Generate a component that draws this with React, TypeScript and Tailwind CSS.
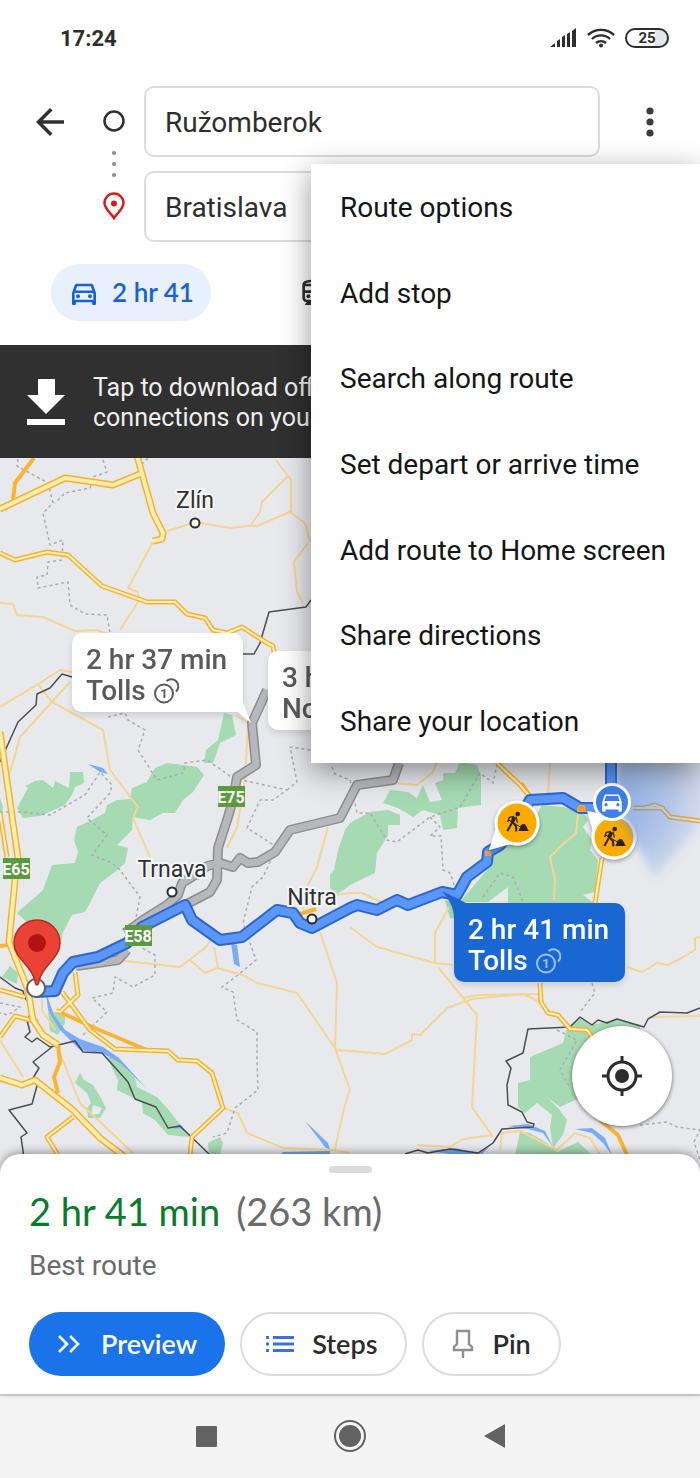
import React, { useState } from 'react';
import { MdArrowBack, MdDirectionsCar, MdOutlineDirectionsCar, MdOutlineDirectionsTransit } from 'react-icons/md';

const MENU_ITEMS = [
  'Route options',
  'Add stop',
  'Search along route',
  'Set depart or arrive time',
  'Add route to Home screen',
  'Share directions',
  'Share your location',
];

// Map geometry, all in map units
const FORESTS = [
  '17,808 28,788 25,786 35,781 43,780 53,788 55,781 69,788 70,772 83,772 84,783 75,787 73,793 65,805 40,816 23,818',
  '132,788 147,782 155,768 167,763 197,767 204,775 193,792 183,800 175,813 163,813 150,820 133,817 132,830 117,845 128,848 125,863 115,872 100,883 93,897 85,912 72,915 63,932 60,947 50,965 35,930 17,913 43,890 52,865 75,863 78,852 74,840 77,827 92,820 105,813 107,805 117,800 130,799',
  '224,713 232,715 236,735 220,743 213,763 204,763 206,750 218,740',
  '0,798 3,807 0,822',
  '2,977 10,966 18,973 17,984',
  '48,1012 65,1013 65,1023 58,1035 50,1031',
  '107,1057 117,1058 127,1070 135,1078 137,1087 157,1097 167,1108 182,1127 190,1137 168,1135 155,1120 143,1113 142,1102 117,1090 118,1080 113,1070',
  '80,1073 84,1080 93,1085 98,1093 106,1108 100,1118 88,1118 87,1108 91,1103 87,1093 75,1083',
  '208,1143 220,1137 223,1143 220,1155 209,1155',
  '350,823 345,830 338,850 334,870 330,875 330,888 335,895 345,889 350,885 375,873 377,853 388,835 388,825 400,825 400,815 388,810 370,812',
  '383,803 390,790 408,792 417,798 423,785 430,802 442,800 435,783 443,780 443,773 455,773 460,762 477,765 481,775 481,805 458,808 457,828 443,830 440,815 423,810 413,817 398,808',
  '542,805 563,807 583,812 588,820 583,827 592,840 590,850 598,860 595,892 583,895 595,904 508,904 508,887 488,902 460,902 487,870 493,850 523,840',
  '445,900 458,903 460,919 450,918',
  '567,1028 580,1017 592,1025 615,1019 640,1025 640,1100 575,1100 560,1107 548,1098 558,1108 567,1120 563,1135 553,1148 550,1128 552,1115 537,1103 525,1113 518,1107 518,1083 530,1080 530,1057 563,1043',
  '520,1132 530,1133 547,1143 557,1152 578,1142 592,1155 515,1155',
];

const WATER = [
  '88,764 103,768 108,774 100,772',
  '46,993 48,1010 60,1030 80,1050 102,1053 120,1063 146,1088 119,1058 103,1047 80,1039 65,1030 54,1015',
  '231,943 237,945 240,967 234,964',
  '305,1121 328,1143 330,1150 325,1147',
  '508,1126 528,1124 545,1131 553,1147 543,1133 528,1129',
  '575,1129 592,1128 605,1138 612,1155 603,1143 592,1133',
  '173,1129 180,1124 188,1134 180,1128',
  '428,1151 455,1148 478,1153 494,1142 480,1156 450,1154',
  '283,1152 330,1151 330,1154 280,1155',
];

const BORDERS = [
  '0,762 18,722 36,705 37,694 50,688 62,674 72,677',
  '242,654 254,654 260,643 269,612 306,607 311,600',
  '0,977 15,988 23,991 25,998 32,1007 29,1017 27,1020 30,1032 25,1037 32,1042 37,1038 50,1047 75,1041 83,1052 102,1053 128,1082 135,1099 156,1107 168,1128 180,1126 209,1154',
  '52,1047 33,1062 39,1068 33,1078 38,1082 32,1104 9,1110 27,1133 21,1137 24,1158',
  '700,1008 687,1013 660,1012 648,1019 644,1027 617,1019 607,1023 598,1020 592,1025 580,1017 570,1027 528,1029 523,1053 506,1061 511,1068 507,1085 508,1105 522,1112 527,1122 534,1124 533,1127 502,1129 493,1143 478,1153 450,1149 428,1153 418,1150 405,1154',
];

const DISTRICTS = [
  '18,459 17,466 48,483 53,503 43,513 50,545 63,540 62,560 48,562 47,575 37,577 38,588 68,582 70,605 85,614 107,615 110,633',
  '103,460 107,472 93,477 90,488 65,493 55,503',
  '148,458 142,464 138,472',
  '108,717 125,713 128,720 145,730 138,750 157,780 183,773 185,763 207,760 233,778 287,790 273,800 260,800 247,828 277,847 263,877 252,887 243,923 256,960 238,975 222,987 233,992 237,1020 257,1032 257,1060 258,1090 235,1108 227,1133 213,1137',
  '287,790 297,782 290,747 311,750',
  '332,767 335,774 350,780 357,813 370,813 387,840 397,842 430,817 460,807 480,773 493,783 497,765',
  '430,817 440,827 430,836 441,836 443,870 450,873 455,887',
  '0,812 22,812 50,815 85,795 100,772 112,785 110,793 87,818 107,835 92,855 112,863 120,870 140,897 135,923 142,948 155,955 155,975 133,987 115,977 113,993 92,998 107,1012 83,1035',
  '0,1003 20,1007 8,1015 0,1013',
  '483,897 500,873 513,877 523,902',
  '592,983 595,993 580,1012',
  '557,1030 577,1040 560,1070 570,1087',
  '640,1125 667,1122 677,1127 700,1130 694,1142 700,1160',
];

const MINOR_ROADS = [
  '167,531 190,524 200,523 230,528 248,526 257,526 290,512 305,523 310,542',
  '276,460 288,476 262,502 260,512 250,526',
  '288,476 291,480 291,512',
  '153,542 128,588 138,592 138,602 120,630',
  '308,543 294,562 297,592 303,603',
  '0,603 13,604 17,615 43,617 75,631 97,630 108,634',
  '0,707 40,683 60,670 72,672',
  '70,682 20,737 10,773',
  '37,683 52,702 103,730 110,770 138,807 133,818 150,857',
  '236,715 248,723 245,780 237,827 227,848',
  '328,827 317,867 308,885 303,910',
  '78,968 115,960 180,967 205,948 215,935',
  '190,960 205,973 217,968 243,975 257,983 297,993 335,1048 350,1090 345,1105 340,1125 335,1150',
  '214,947 218,968',
  '320,932 337,983 335,1048',
  '335,1050 350,1051 385,1054 412,1040 412,1034 420,1035 447,1008 472,999 523,994 540,1002',
  '350,927 377,947 435,963 453,965',
  '438,967 477,1015 472,1107 493,1137',
  '449,907 435,933 435,963',
  '335,913 362,908',
  '313,900 335,895 350,893 362,893 383,903',
  '393,783 417,785 432,773 437,763',
  '550,763 548,793',
  '578,813 576,833 560,847 550,857 555,880 554,900',
  '627,967 642,972 657,963 668,965 683,957 695,950 695,938 700,937',
  '463,998 477,995 543,994',
  '417,1145 450,1147 463,1139 493,1135',
  '223,1108 238,1113 247,1133 283,1148 333,1150 350,1153',
  '60,1053 80,1103 133,1153',
  '0,1040 23,1077',
  '650,1017 700,1016',
  '42,990 42,1010 55,1030',
  '500,1150 502,1133 520,1131 557,1150 575,1133 590,1138 600,1155',
];

const MAIN_ROADS = [
  '0,553 15,560 47,552 68,555 102,586 147,602 175,602 187,614 205,618 213,630 227,633 242,627 262,640 273,646 274,652',
  '73,1117 47,1137 58,1155',
  '75,972 78,995 60,1012 56,1011',
  '62,992 90,1030 115,1049 168,1051 178,1060 197,1061 212,1073 223,1108 192,1137 190,1155',
  '0,990 25,997',
  '0,1037 15,1016 38,1022',
  '497,763 520,785 530,797',
  '633,808 662,808 670,817 700,821',
  '645,808 655,805 664,809',
  '602,858 595,903',
  '540,983 541,1002 548,1013 558,1015 570,1029 587,1030 592,1037',
  '0,813 7,857',
];

const MOTORWAYS = [
  '0,509 65,478 113,485 140,474',
  '136,452 153,513 163,533 162,539 153,541',
  '0,732 18,858 15,880 9,942 28,990 33,1020 43,1035 58,1045',
  '0,1078 22,1085 35,1080 73,1110 100,1138 125,1157',
];

const ORANGE_ROADS = [
  '34,458 15,483 13,500',
  '58,1045 60,1062 54,1077 58,1093',
  '60,1012 90,1026 147,1050',
  '0,946 9,945',
  '600,1120 618,1135 627,1155',
  '300,914 316,909',
  '521,783 531,797',
];

const ALT_ROUTES = [
  '195,875 182,883 178,895 167,905 143,920 125,933',
  '399,763 393,780 357,785 340,818 290,830 275,852 258,862 248,863 240,858 233,867 220,863 207,866 195,876',
  '267,690 252,723 256,765 237,777 233,800 228,817 218,848 217,880 210,892 187,904',
  '127,950 118,960 76,966',
];

const BEST_ROUTE =
  '36,992 55,991 63,973 73,962 98,957 127,943 142,927 185,905 192,920 220,940 242,937 277,910 293,913 300,923 312,928 350,908 357,905 377,910 397,900 408,905 442,892 457,895 467,877 487,862 488,852 500,845 515,825 530,800 563,798 580,808 600,808 611,800 611,758';

const CITIES = [
  { name: 'Zlín', x: 195, y: 508, cx: 195, cy: 523 },
  { name: 'Trnava', x: 172, y: 877, cx: 172, cy: 892 },
  { name: 'Nitra', x: 312, y: 905, cx: 312, cy: 919 },
];

const SHIELDS = [
  { name: 'E75', x: 218, y: 786 },
  { name: 'E65', x: 3, y: 858 },
  { name: 'E58', x: 125, y: 925 },
];

const Lines: React.FC<{ items: string[]; color: string; width: number; dash?: string }> = ({ items, color, width, dash }) => (
  <g fill="none" stroke={color} strokeWidth={width} strokeDasharray={dash} strokeLinejoin="round">
    {items.map((points) => (
      <polyline key={points} points={points} />
    ))}
  </g>
);

const RoadWorks: React.FC<{ x: number; y: number }> = ({ x, y }) => (
  <svg x={x} y={y} width="23" height="21" viewBox="78 168 69 63" fill="none" stroke="#2b2210" strokeLinejoin="round">
    <circle cx="113" cy="177" r="7" fill="#2b2210" stroke="none" />
    <path d="M103 186L96 204" strokeWidth="11" />
    <path d="M95 205L82 228M98 202l10 12 1 15" strokeWidth="6" />
    <path d="M102 184L88 187l-5 14M108 185l4 18" strokeWidth="4" />
    <path d="M86 195l40 24" strokeWidth="3" />
    <path d="M115 228l8-17 5-4h6l5 7 7 14z" fill="#2b2210" stroke="none" />
  </svg>
);

const MapDrawing: React.FC = () => (
  <svg
    className="absolute inset-0 h-full w-full"
    viewBox="0 458 700 716"
    preserveAspectRatio="xMidYMid slice"
    role="img"
    aria-label="Route map"
  >
    <defs>
      <radialGradient id="heading" gradientUnits="userSpaceOnUse" cx="612" cy="802" r="110">
        <stop offset="0" stopColor="#4a80e0" stopOpacity="0.6" />
        <stop offset="0.5" stopColor="#4a80e0" stopOpacity="0.35" />
        <stop offset="1" stopColor="#4a80e0" stopOpacity="0" />
      </radialGradient>
      <filter id="soft" x="-20%" y="-20%" width="140%" height="140%">
        <feGaussianBlur stdDeviation="5" />
      </filter>
      <filter id="drop" x="-30%" y="-30%" width="160%" height="160%">
        <feDropShadow dx="0" dy="2" stdDeviation="2" floodOpacity="0.35" />
      </filter>
    </defs>
    <rect x="0" y="458" width="700" height="716" fill="#e8e9ed" />
    <g fill="#a5dab3">
      {FORESTS.map((points) => (
        <polygon key={points} points={points} />
      ))}
    </g>
    <polygon points="93,1105 102,1108 99,1114 91,1115" fill="#e8e9ed" />
    <g fill="#7baaf7">
      {WATER.map((points) => (
        <polygon key={points} points={points} />
      ))}
    </g>

    <Lines items={MINOR_ROADS} color="#f3d596" width={2} />
    <Lines items={DISTRICTS} color="#a9acb3" width={1.5} dash="3 3" />
    <Lines items={BORDERS} color="#4a4d52" width={1.5} />
    <Lines items={ORANGE_ROADS} color="#fbb432" width={4} />
    <Lines items={MAIN_ROADS} color="#f6b130" width={5} />
    <Lines items={MAIN_ROADS} color="#fff3bd" width={2} />
    <Lines items={MOTORWAYS} color="#f6b130" width={7} />
    <Lines items={MOTORWAYS} color="#fdeeb0" width={4} />

    <Lines items={ALT_ROUTES} color="#8c8e92" width={10} />
    <Lines items={ALT_ROUTES} color="#b6b8bb" width={7} />
    <Lines items={[BEST_ROUTE]} color="#2d67cc" width={12} />
    <Lines items={[BEST_ROUTE]} color="#5b96fb" width={8} />
    <path d="M485 851h6v5h-6zM577 808l2-3h5l2 3v4h-9z" fill="#f59d35" />

    {CITIES.map((city) => (
      <g key={city.name}>
        <circle cx={city.cx} cy={city.cy} r="4.5" fill="#fff" stroke="#2b2c2e" strokeWidth="2" />
        <text
          x={city.x}
          y={city.y}
          textAnchor="middle"
          fill="#2f3033"
          stroke="#f4f5f7"
          strokeWidth="4"
          paintOrder="stroke"
          className="font-[Roboto,sans-serif] text-[23px] font-normal"
        >
          {city.name}
        </text>
      </g>
    ))}

    {SHIELDS.map((shield) => (
      <g key={shield.name}>
        <rect x={shield.x} y={shield.y} width="27" height="21" fill="#5b9a3f" />
        <text
          x={shield.x + 13}
          y={shield.y + 17}
          textAnchor="middle"
          fill="#fff"
          className="font-[Roboto,sans-serif] text-[16px] font-bold"
        >
          {shield.name}
        </text>
      </g>
    ))}

    {/* Destination */}
    <circle cx="36" cy="988" r="9" fill="#fff" stroke="#5b5e63" strokeWidth="2" />
    <path
      d="M37 985c-1 0-2-2-2-4-3-16-21-22-21-38a23 23 0 0 1 46 0c0 16-18 22-21 38 0 2-1 4-2 4z"
      fill="#ea4335"
      stroke="#b9281d"
      strokeWidth="1.5"
    />
    <circle cx="37" cy="943" r="9" fill="#b31412" />

    {/* Road works */}
    <g filter="url(#drop)" fill="#fff">
      <path d="M489 850l7-22 18 15z" />
      <circle cx="517" cy="823" r="22.5" />
      <path d="M587 811l18 3-11 20z" />
      <circle cx="614" cy="837" r="22.5" />
    </g>
    <circle cx="517" cy="823" r="19.5" fill="#fbab00" />
    <circle cx="614" cy="837" r="19.5" fill="#fbab00" />
    <RoadWorks x={506} y={811} />
    <RoadWorks x={603} y={826} />

    {/* Current position and its heading beam */}
    <polygon points="612,802 620,745 720,745 720,800 655,878" fill="url(#heading)" filter="url(#soft)" />
    <circle cx="612" cy="802" r="17.5" fill="#3f80ea" stroke="#fff" strokeWidth="3" />
    <MdDirectionsCar x="599" y="789" size={26} color="#fff" />
  </svg>
);

const TollIcon: React.FC<{ className?: string }> = ({ className }) => (
  <svg width="26" height="26" viewBox="0 0 26 26" className={className} fill="none" stroke="currentColor" strokeWidth="2">
    <circle cx="10" cy="15.500" r="9" />
    <path d="M12.500 3A7 7 0 0 1 22 13.500" />
    <text x="10" y="20" textAnchor="middle" fill="currentColor" stroke="none" className="text-[13px] font-bold">
      1
    </text>
  </svg>
);

const StatusBar: React.FC = () => (
  <div className="flex h-[76px] items-center justify-between pr-[31px] pl-[60px] text-[#2e2e2e]">
    <span className="text-[22px] font-bold">17:24</span>
    <div className="flex items-center gap-[10px]">
      <svg width="27" height="20" viewBox="0 0 27 20" fill="currentColor" aria-hidden="true">
        <path d="M0 19l5-4v4zM7 13l3-2v8H7zM12 9l3-2v12h-3zM17 6l3-2v15h-3zM22 3l4-3v19h-4z" />
      </svg>
      <svg width="28" height="20" viewBox="0 0 28 20" fill="none" stroke="currentColor" strokeWidth="2.400" aria-hidden="true">
        <path d="M1 7a19 19 0 0 1 26 0M5 11a13 13 0 0 1 18 0M9 15a7.500 7.500 0 0 1 10 0" />
        <circle cx="14" cy="17.500" r="2" fill="currentColor" stroke="none" />
      </svg>
      <div className="h-5 w-11 rounded-full border-2 border-current bg-gradient-to-r from-white from-70% to-gray-200 to-70% text-center text-[15px] leading-4 font-bold">
        25
      </div>
    </div>
  </div>
);

const SearchPanel: React.FC<{ onMenu: () => void }> = ({ onMenu }) => {
  const [from, setFrom] = useState('Ružomberok');
  const [to, setTo] = useState('Bratislava');
  const field =
    'h-[71px] w-full rounded-[10px] border-2 border-[#dcdcdc] bg-white px-[19px] pt-[2px] text-[28px] text-[#2d2d2d] outline-none';

  return (
    <header className="pt-[10px] pb-6">
      <div className="flex items-start">
        <button type="button" aria-label="Back" className="flex h-[71px] w-[100px] items-center justify-center text-[#303030]">
          <MdArrowBack size={42} />
        </button>
        <svg width="28" height="156" viewBox="0 0 28 156" fill="none" aria-hidden="true" className="mr-4">
          <circle cx="14" cy="35" r="9.5" stroke="#2f2f2f" strokeWidth="2.500" />
          <g fill="#8a8a8a">
            <circle cx="14" cy="67" r="2" />
            <circle cx="14" cy="78" r="2" />
            <circle cx="14" cy="89" r="2" />
          </g>
          <path
            d="M14 132c-3-5-9.500-9-9.500-15a9.500 9.500 0 0 1 19 0c0 6-6.500 10-9.500 15z"
            stroke="#d21f1f"
            strokeWidth="2.500"
          />
          <circle cx="14" cy="117.500" r="3" fill="#d21f1f" />
        </svg>
        <div className="flex flex-1 flex-col gap-[14px]">
          <input aria-label="From" value={from} onChange={(e) => setFrom(e.target.value)} className={field} />
          <input aria-label="To" value={to} onChange={(e) => setTo(e.target.value)} className={field} />
        </div>
        <button
          type="button"
          aria-label="More options"
          onClick={onMenu}
          className="flex h-[71px] w-[100px] items-center justify-center text-[#3c3c3c]"
        >
          <svg width="8" height="30" viewBox="0 0 8 30" fill="currentColor">
            <circle cx="4" cy="4" r="3.600" />
            <circle cx="4" cy="15" r="3.600" />
            <circle cx="4" cy="26" r="3.600" />
          </svg>
        </button>
      </div>

      {/* Travel modes */}
      <div className="mt-[22px] flex items-center pl-[51px]">
        <button
          type="button"
          className="flex h-[57px] w-[160px] items-center justify-center gap-3 rounded-full bg-[#e8f0fe] font-[Lato,sans-serif] text-[26px] font-semibold text-[#1a62cf]"
        >
          <MdOutlineDirectionsCar size={32} />
          2 hr 41
        </button>
        <button type="button" aria-label="Transit" className="ml-[86px] text-[#2f2f2f]">
          <MdOutlineDirectionsTransit size={32} />
        </button>
      </div>
    </header>
  );
};

const RouteMenu: React.FC = () => (
  <div
    role="menu"
    className="absolute top-[164px] right-0 z-20 grid h-[599px] w-[389px] auto-rows-fr bg-white shadow-[0_8px_28px_rgba(0,0,0,0.42)]"
  >
    {MENU_ITEMS.map((item) => (
      <button
        key={item}
        type="button"
        role="menuitem"
        className="pt-[3px] pl-[29px] text-left text-[28px] whitespace-nowrap text-[#151515]"
      >
        {item}
      </button>
    ))}
  </div>
);

const Sheet: React.FC = () => (
  <section className="relative -mt-5 rounded-t-[20px] bg-white px-[29px] pt-3 pb-[18px] shadow-[0_-2px_8px_rgba(0,0,0,0.35)]">
    <div className="mx-auto h-[7px] w-[43px] rounded-full bg-[#dcdcdc]" />
    <h1 className="mt-[14px] flex items-center gap-4 font-[Lato,sans-serif] text-[38px] leading-[48px] text-[#0a7b2c]">
      2 hr 41 min <span className="text-[#6b6b6b]">(263 km)</span>
    </h1>
    <p className="mt-[14px] text-[28px] leading-[34px] text-[#6b6b6b]">Best route</p>
    <div className="mt-[29px] flex gap-[15px] font-[Lato,sans-serif] text-[27px] font-semibold text-[#2b2b2d]">
      <button type="button" className="flex h-16 items-center gap-[21px] rounded-full bg-[#1a73e8] px-7 text-white">
        <svg width="23" height="20" viewBox="0 0 23 20" fill="none" stroke="currentColor" strokeWidth="2.600">
          <path d="M2 2l8 8-8 8M13 2l8 8-8 8" />
        </svg>
        Preview
      </button>
      <button type="button" className="flex h-16 items-center gap-[18px] rounded-full border-2 border-[#dcdcdc] pr-7 pl-6">
        <svg width="28" height="18" viewBox="0 0 28 18" fill="#3f6fe0">
          <path d="M0 1h3v3H0zM0 7.500h3v3H0zM0 14h3v3H0zM7 1h21v3H7zM7 7.500h21v3H7zM7 14h21v3H7z" />
        </svg>
        Steps
      </button>
      <button type="button" className="flex h-16 items-center gap-[18px] rounded-full border-2 border-[#dcdcdc] px-7">
        <svg width="22" height="30" viewBox="0 0 22 30" fill="none" stroke="#8e8f96" strokeWidth="2.400">
          <path d="M5 2h12v13l3 3v3H2v-3l3-3zM11 21v8" />
        </svg>
        Pin
      </button>
    </div>
  </section>
);

const App: React.FC = () => {
  const [isMenuOpen, setIsMenuOpen] = useState(true);

  return (
    <div className="relative flex min-h-screen flex-col overflow-hidden bg-white font-[Roboto,sans-serif]">
      <StatusBar />
      <SearchPanel onMenu={() => setIsMenuOpen(!isMenuOpen)} />
      {isMenuOpen && <RouteMenu />}

      {/* Offline banner */}
      <div className="flex h-[113px] items-center gap-7 overflow-hidden bg-[#303030] pl-[27px] text-[25px] leading-[30px] whitespace-nowrap text-[#efefef]">
        <svg width="38" height="46" viewBox="0 0 38 46" fill="#fff" className="shrink-0" aria-hidden="true">
          <path d="M11 0h17v16h10L19 35 0 16h11zM0 40h38v6H0z" />
        </svg>
        <p className="pt-[2px]">
          Tap to download offline
          <br />
          connections on your device
        </p>
      </div>

      <main className="relative min-h-[716px] flex-1 overflow-hidden text-[28px] leading-[31px] font-medium">
        <MapDrawing />

        {/* Route callouts */}
        <div className="absolute top-[175px] left-[72px] h-[79px] w-[171px] rounded-[10px] bg-white px-[14px] pt-[11px] whitespace-nowrap text-[#5a5a5a] drop-shadow-md">
          2 hr 37 min
          <div className="flex items-center gap-2">
            Tolls <TollIcon />
          </div>
          <svg width="46" height="24" viewBox="0 0 46 24" className="absolute top-[67px] left-[134px]" fill="#fff">
            <path d="M0 12L36 0l9 23-13-11z" />
          </svg>
        </div>
        <div className="absolute top-[193px] left-[268px] h-[79px] rounded-[10px] bg-white px-[14px] pt-[11px] whitespace-nowrap text-[#5a5a5a] drop-shadow-md">
          3 hr
          <div>No</div>
        </div>
        <div className="absolute top-[445px] left-[454px] h-[79px] w-[171px] rounded-[10px] bg-[#1967d2] px-[14px] pt-[11px] whitespace-nowrap text-white drop-shadow-md">
          2 hr 41 min
          <div className="flex items-center gap-2">
            Tolls <TollIcon className="text-[#9cc3ff]" />
          </div>
          <svg width="24" height="26" viewBox="0 0 24 26" className="absolute -top-3 -left-3" fill="#1967d2">
            <path d="M0 0l24 12-12 14c0-10-6-19-12-26z" />
          </svg>
        </div>

        <button
          type="button"
          aria-label="My location"
          className="absolute right-7 bottom-12 flex size-[100px] items-center justify-center rounded-full bg-white text-[#2d2d2d] shadow-[0_1px_4px_rgba(0,0,0,0.55)]"
        >
          <svg width="40" height="40" viewBox="0 0 40 40" fill="none" stroke="currentColor" strokeWidth="3">
            <circle cx="20" cy="20" r="14" />
            <circle cx="20" cy="20" r="7" fill="currentColor" stroke="none" />
            <path d="M20 0v7M20 33v7M0 20h7M33 20h7" />
          </svg>
        </button>
      </main>

      <Sheet />

      {/* System navigation */}
      <nav className="flex h-[84px] items-center justify-center gap-[100px] border-t-2 border-[#d6d6d6] bg-[#f4f4f4] pb-[2px] text-[#636363]">
        <button type="button" aria-label="Recent apps" className="flex size-11 items-center justify-center">
          <span className="size-[21px] rounded-[1px] bg-current" />
        </button>
        <button type="button" aria-label="Home" className="flex size-11 items-center justify-center">
          <span className="flex size-8 items-center justify-center rounded-full border-2 border-current">
            <span className="size-[22px] rounded-full bg-current" />
          </span>
        </button>
        <button type="button" aria-label="Back to previous app" className="flex size-11 items-center justify-center">
          <svg width="21" height="24" viewBox="0 0 21 24" fill="currentColor">
            <path d="M21 0v24L0 12z" />
          </svg>
        </button>
      </nav>
    </div>
  );
};

export default App;
